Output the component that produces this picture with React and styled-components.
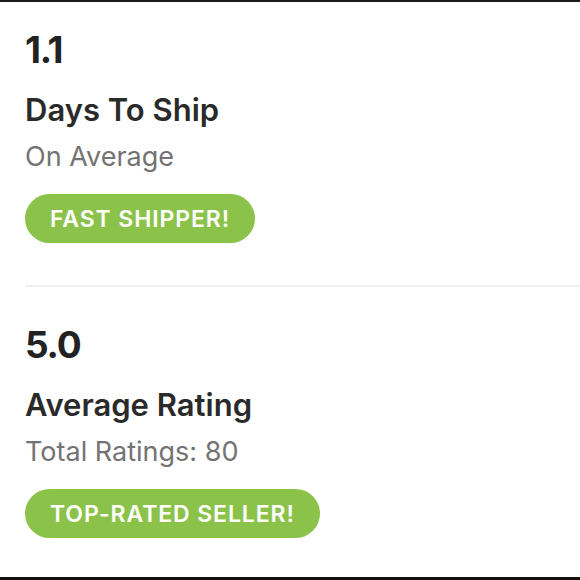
import React from 'react';
import styled, { createGlobalStyle } from 'styled-components';

const GlobalStyle = createGlobalStyle`
  html, body {
    margin: 0;
    padding: 0;
    background: #fff;
  }
  body {
    font-family: Inter, Lato, sans-serif;
    -webkit-font-smoothing: antialiased;
  }
`;

const Page = styled.div`
  width: 580px;
  height: 580px;
  box-sizing: border-box;
  border-top: 2px solid #1a1a1a;
  border-bottom: 3px solid #111;
  display: flex;
  flex-direction: column;
  overflow: hidden;
`;

const Stat = styled.section`
  display: flex;
  flex-direction: column;
  align-items: flex-start;
  padding: ${p => p.$top}px 0 0 25px;
`;

const Value = styled.div`
  font-size: 37px;
  line-height: 1;
  font-weight: 700;
  color: #222;
  letter-spacing: -1.2px;
`;

const Title = styled.div`
  margin-top: 26px;
  font-size: 31px;
  line-height: 1;
  font-weight: 600;
  color: #2a2a2a;
`;

const Subtitle = styled.div`
  margin-top: 18px;
  font-size: 27px;
  line-height: 1;
  color: #737373;
`;

const Badge = styled.div`
  margin-top: 24px;
  height: 49px;
  display: flex;
  align-items: center;
  padding: 0 25px;
  border-radius: 25px;
  background: #8bc34a;
  color: #fff;
  font-size: 23px;
  font-weight: 600;
  letter-spacing: 0.9px;
`;

const Divider = styled.hr`
  margin: 42px 0 0 25px;
  border: 0;
  height: 2px;
  background: #efefef;
`;

const stats = [
  { value: '1.1', title: 'Days To Ship', sub: 'On Average', badge: 'FAST SHIPPER!' },
  { value: '5.0', title: 'Average Rating', sub: 'Total Ratings: 80', badge: 'TOP-RATED SELLER!' },
];

export default function App() {
  return (
    <>
      <GlobalStyle />
      <Page>
        {stats.map((s, i) => (
          <React.Fragment key={s.value}>
            {i > 0 && <Divider />}
            <Stat $top={i === 0 ? 29 : 39}>
              <Value>{s.value}</Value>
              <Title>{s.title}</Title>
              <Subtitle>{s.sub}</Subtitle>
              <Badge>{s.badge}</Badge>
            </Stat>
          </React.Fragment>
        ))}
      </Page>
    </>
  );
}
